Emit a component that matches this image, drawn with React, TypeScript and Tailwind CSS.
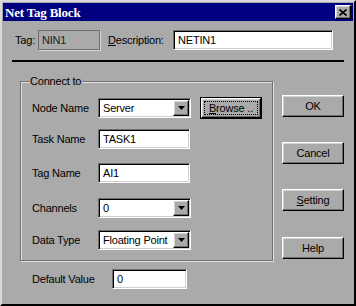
import React from 'react';

// Classic 3D edges
const sunken =
  'border border-t-[#6e6e6e] border-l-[#6e6e6e] border-b-white border-r-white shadow-[inset_1px_1px_0_#000,inset_-1px_-1px_0_#d0d0d0]';
const raised =
  'border border-t-white border-l-white border-b-black border-r-black shadow-[inset_-1px_-1px_0_#707070,inset_1px_1px_0_#d4d4d4]';

const TextBox = ({ value, w }: { value: string; w: string }) => (
  <div className={`${sunken} ${w} h-[20px] bg-white flex items-center pl-[4px]`}>{value}</div>
);

const Combo = ({ value }: { value: string }) => (
  <div className={`${sunken} w-[93px] h-[20px] bg-white flex items-center pl-[4px] pr-[1px]`}>
    <span className="flex-1">{value}</span>
    <div className={`${raised} w-[16px] h-[16px] bg-[#aaaaaa] flex items-center justify-center`}>
      <svg width="7" height="4" viewBox="0 0 7 4">
        <path d="M0 0h7L3.5 4z" fill="#000" />
      </svg>
    </div>
  </div>
);

const Button = ({ children, className = '' }: { children: React.ReactNode; className?: string }) => (
  <div className={`${raised} w-[62px] h-[22px] bg-[#aaaaaa] flex items-center justify-center ${className}`}>
    {children}
  </div>
);

const Row = ({ label, children, className = '' }: { label: string; children: React.ReactNode; className?: string }) => (
  <div className={`flex items-center ${className}`}>
    <span className="w-[66px]">{label}</span>
    {children}
  </div>
);

export default function App() {
  return (
    <div
      className="w-[356px] h-[306px] bg-[#aaaaaa] text-black text-[11px] leading-none tracking-[-0.2px] border-2 border-t-[#d8d8d8] border-l-[#d8d8d8] border-b-black border-r-black p-[1px] overflow-hidden"
      style={{ fontFamily: '"Liberation Sans", Arial, sans-serif' }}
    >
      {/* Title bar */}
      <div className="h-[18px] bg-[#000080] flex items-center justify-between pl-[2px] pr-[2px]">
        <span
          className="text-white font-bold text-[13px] tracking-[-0.2px]"
          style={{ fontFamily: '"Liberation Serif", "Times New Roman", serif' }}
        >
          Net Tag Block
        </span>
        <div className={`${raised} w-[16px] h-[14px] bg-[#aaaaaa] flex items-center justify-center`}>
          <svg width="8" height="7" viewBox="0 0 8 7">
            <path d="M0.5 0.5l7 6M7.5 0.5l-7 6" stroke="#000" strokeWidth="1.6" />
          </svg>
        </div>
      </div>

      {/* Tag / Description */}
      <div className="flex items-center h-[20px] mt-[9px] pl-[12px]">
        <span className="w-[23px]">Tag:</span>
        <div className="w-[62px] h-[20px] border border-[#6e6e6e] shadow-[1px_1px_0_#d8d8d8] flex items-center pl-[3px] text-[#202020]">
          NIN1
        </div>
        <span className="w-[65px] ml-[8px]">
          <u>D</u>escription:
        </span>
        <TextBox value="NETIN1" w="w-[160px]" />
      </div>

      {/* Separator */}
      <div className="h-[2px] bg-black mt-[10px] ml-[9px] w-[332px]" />

      <div className="flex pl-[17px]">
        <div className="flex flex-col pt-[19px]">
          {/* Group box */}
          <div className="relative w-[253px] h-[180px] border border-[#707070] shadow-[1px_1px_0_#e0e0e0,inset_1px_1px_0_#e0e0e0] pl-[11px] pt-[15px]">
            <span className="absolute left-[8px] top-[-6px] bg-[#aaaaaa] px-[1px]">Connect to</span>
            <Row label="Node Name">
              <Combo value="Server" />
              <div className="ml-[9px] w-[62px] h-[22px] border border-black">
                <div className={`${raised} w-full h-full bg-[#aaaaaa] flex items-center justify-center p-[2px]`}>
                  <div className="w-full h-full border border-dotted border-black flex items-center justify-center">
                    <span>
                      <u>B</u>rowse ..
                    </span>
                  </div>
                </div>
              </div>
            </Row>
            <Row label="Task Name" className="mt-[10px]">
              <TextBox value="TASK1" w="w-[92px]" />
            </Row>
            <Row label="Tag Name" className="mt-[14px]">
              <TextBox value="AI1" w="w-[92px]" />
            </Row>
            <Row label="Channels" className="mt-[15px]">
              <Combo value="0" />
            </Row>
            <Row label="Data Type" className="mt-[12px]">
              <Combo value="Floating Point" />
            </Row>
          </div>

          <div className="flex items-center mt-[8px] pl-[12px]">
            <span className="w-[80px]">Default Value</span>
            <TextBox value="0" w="w-[75px]" />
          </div>
        </div>

        {/* Buttons */}
        <div className="flex flex-col ml-[9px] pt-[33px]">
          <Button>OK</Button>
          <Button className="mt-[25px]">Cancel</Button>
          <Button className="mt-[25px]">
            <span>
              <u>S</u>etting
            </span>
          </Button>
          <Button className="mt-[26px]">Help</Button>
        </div>
      </div>
    </div>
  );
}
